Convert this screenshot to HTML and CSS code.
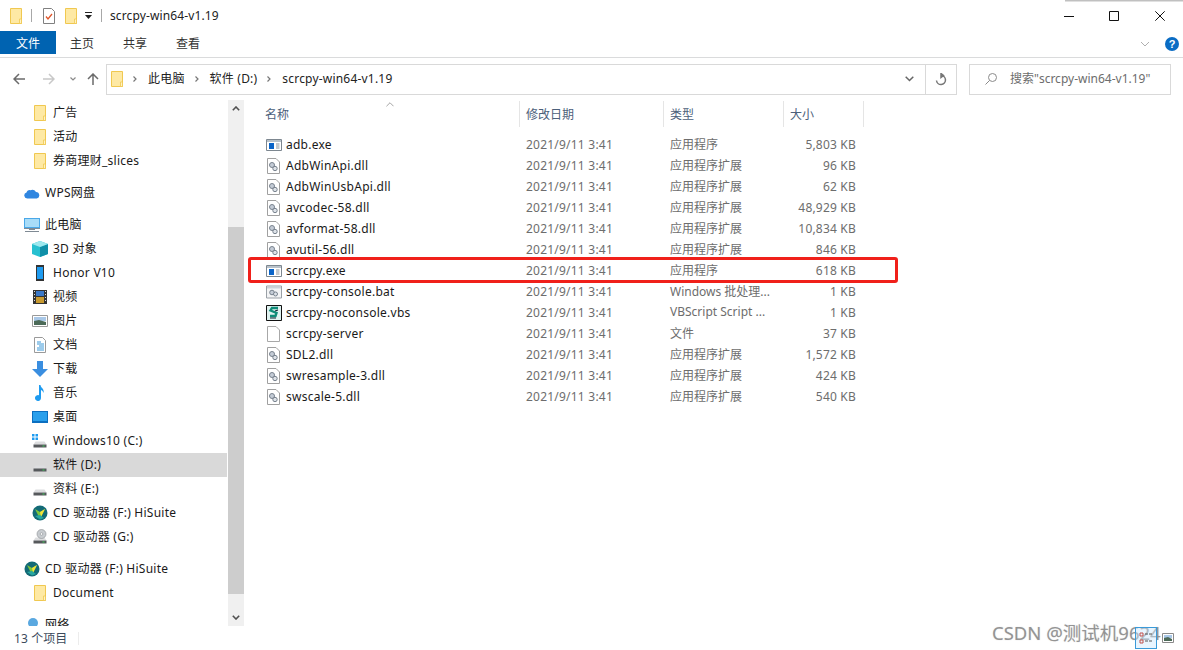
FILE: index.html
```html
<!DOCTYPE html>
<html lang="zh-CN">
<head>
    <meta charset="UTF-8">
    <title>scrcpy-win64-v1.19</title>
    <link rel="stylesheet" href="styles.css">
</head>
<body>
<svg class="defs" width="0" height="0">
    <symbol id="i-folder" viewBox="0 0 12 16">
        <path d="M.5.5h11v15H.5z" fill="#fee9a4" stroke="#f0c850"/>
        <path d="M9.5 11h2v4.5h-2z" fill="#fff3c4" stroke="#f0c850" stroke-width=".8"/>
    </symbol>
    <symbol id="i-exe" viewBox="0 0 16 12">
        <path d="M.5.500h15v11H.5z" fill="#fff" stroke="#7d8790"/>
        <path d="M1 1h14v2H1z" fill="#b9c2ca"/>
        <path d="M3 4h5v6H3z" fill="#0a64c8"/>
        <path d="M10 5h3.500M10 7h3.500M10 9h3.500" stroke="#8a939b"/>
    </symbol>
    <symbol id="i-dll" viewBox="0 0 13 16">
        <path d="M.5.500h8.500l3.500 3.500v11.500H.5z" fill="#fff" stroke="#a0a0a0"/>
        <circle cx="5" cy="7" r="2.500" fill="#c4ccd6" stroke="#78828e"/>
        <circle cx="8" cy="10.500" r="2.200" fill="#dde2e8" stroke="#78828e"/>
    </symbol>
    <symbol id="i-bat" viewBox="0 0 16 13">
        <path d="M.5.500h15v12H.5z" fill="#f3f4f5" stroke="#9aa0a6"/>
        <path d="M1 1h14v2H1z" fill="#ccd2d8"/>
        <circle cx="6" cy="7" r="2.300" fill="#c4ccd6" stroke="#78828e"/>
        <circle cx="9.500" cy="8.500" r="2" fill="#dde2e8" stroke="#78828e"/>
    </symbol>
    <symbol id="i-vbs" viewBox="0 0 16 16">
        <path d="M.5.500h15v15H.5z" fill="#dff2f0" stroke="#111"/>
        <path d="M12 3H6L4.500 5.500l6 2.500-1 3H4" fill="none" stroke="#0d8c78" stroke-width="2.400"/>
        <path d="M12 5l-3 1M4 13h6" stroke="#123" stroke-width="1.200"/>
    </symbol>
    <symbol id="i-file" viewBox="0 0 13 16">
        <path d="M.5.500h8.500l3.500 3.500v11.500H.5z" fill="#fff" stroke="#a8a8a8"/>
    </symbol>
    <symbol id="i-drive" viewBox="0 0 16 16">
        <path d="M3.500 8.500h9l2 3h-13z" fill="#dcdddf"/>
        <path d="M1.500 11.500h13v3h-13z" fill="#56595c"/>
        <path d="M10.500 12.500h2v1h-2z" fill="#3fce58"/>
    </symbol>
    <symbol id="i-hisuite" viewBox="0 0 16 16">
        <circle cx="8" cy="8" r="7.500" fill="#136a76"/>
        <path d="M3 4l5 3 5-3-4 8H7z" fill="#7ec63a"/>
        <path d="M8 7l5-3-4 8z" fill="#f2e23a"/>
        <path d="M3 11l5-1 4 3-4 1.500z" fill="#27a7a0"/>
    </symbol>
</svg>

<div class="window">
    <header class="titlebar">
        <svg class="t-folder"><use href="#i-folder"/></svg>
        <span class="t-sep"></span>
        <svg class="t-check" viewBox="0 0 12 16">
            <path d="M.5.500h8l3 3v12H.5z" fill="#fff" stroke="#808080"/>
            <path d="M3 8.500l2 2.500 4-5" fill="none" stroke="#e0562a" stroke-width="1.300"/>
        </svg>
        <svg class="t-folder t-folder2"><use href="#i-folder"/></svg>
        <svg class="t-drop" viewBox="0 0 7 7"><path d="M0 0h7v1H0zM0 3h7L3.500 7z" fill="#222"/></svg>
        <span class="t-sep t-sep2"></span>
        <span class="t-title">scrcpy-win64-v1.19</span>
        <div class="winbtns">
            <svg class="winbtn" viewBox="0 0 10 10"><path d="M0 5.500h10" stroke="#111"/></svg>
            <svg class="winbtn" viewBox="0 0 10 10"><path d="M.5.500h9v9h-9z" fill="none" stroke="#111"/></svg>
            <svg class="winbtn" viewBox="0 0 10 10"><path d="M.3.300l9.400 9.400M9.700.300L.3 9.700" stroke="#111"/></svg>
        </div>
        <span class="top-shadow"></span>
    </header>

    <nav class="ribbon">
        <span class="tab tab-file">文件</span>
        <span class="tab">主页</span>
        <span class="tab">共享</span>
        <span class="tab">查看</span>
        <svg class="rb-chev" viewBox="0 0 10 6"><path d="M1 1l4 4 4-4" fill="none" stroke="#b0b0b0"/></svg>
        <span class="help">?</span>
    </nav>

    <div class="addr-row">
        <svg class="nav-i" viewBox="0 0 12 12"><path d="M12 6H1M6 1L1 6l5 5" fill="none" stroke="#6b6b6b" stroke-width="1.500"/></svg>
        <svg class="nav-i nav-fwd" viewBox="0 0 12 12"><path d="M0 6h11M6 1l5 5-5 5" fill="none" stroke="#c8c8c8" stroke-width="1.500"/></svg>
        <svg class="nav-c" viewBox="0 0 6 4"><path d="M.5.500L3 3 5.500.500" fill="none" stroke="#8a8a8a" stroke-width="1.200"/></svg>
        <svg class="nav-i nav-up" viewBox="0 0 12 12"><path d="M6 12V1M1 6l5-5 5 5" fill="none" stroke="#6b6b6b" stroke-width="1.500"/></svg>
        <div class="addr">
            <svg class="a-folder"><use href="#i-folder"/></svg>
            <svg class="crumb-c crumb-first" viewBox="0 0 4 6"><path d="M.5.500L3 3 .5 5.500" fill="none" stroke="#777" stroke-width="1.200"/></svg>
            <span class="crumb">此电脑</span>
            <svg class="crumb-c" viewBox="0 0 4 6"><path d="M.5.500L3 3 .5 5.500" fill="none" stroke="#777" stroke-width="1.200"/></svg>
            <span class="crumb">软件 (D:)</span>
            <svg class="crumb-c" viewBox="0 0 4 6"><path d="M.5.500L3 3 .5 5.500" fill="none" stroke="#777" stroke-width="1.200"/></svg>
            <span class="crumb">scrcpy-win64-v1.19</span>
            <span class="addr-space"></span>
            <span class="addr-drop">
                <svg class="drop-c" viewBox="0 0 9 6"><path d="M.7.700l3.800 3.800L8.300.700" fill="none" stroke="#666" stroke-width="1.500"/></svg>
            </span>
            <span class="addr-refresh">
                <svg class="refresh" viewBox="0 0 12 13"><path d="M6 2.500a4.500 4.500 0 1 1-4.500 5M6 .5v4L8.500 2.500z" fill="none" stroke="#777" stroke-width="1.500"/></svg>
            </span>
        </div>
        <div class="search">
            <svg class="s-icon" viewBox="0 0 12 12"><circle cx="7.500" cy="4.500" r="4" fill="none" stroke="#8a8a8a"/><path d="M4.500 7.500L.5 11.500" stroke="#8a8a8a"/></svg>
            <span class="s-text">搜索"scrcpy-win64-v1.19"</span>
        </div>
    </div>

    <main class="content">
        <aside class="side">
            <div class="side-list">
                <div class="s-row child"><svg class="s-i"><use href="#i-folder"/></svg>广告</div>
                <div class="s-row child"><svg class="s-i"><use href="#i-folder"/></svg>活动</div>
                <div class="s-row child gap-after"><svg class="s-i"><use href="#i-folder"/></svg>券商理财_slices</div>
                <div class="s-row top gap-after">
                    <svg class="s-i" viewBox="0 0 16 16"><path d="M3.200 13.500a3 3 0 0 1-.7-5.900 3 3 0 0 1 3.800-2.400A4.500 4.500 0 0 1 12 7a3.300 3.300 0 0 1 .8 6.500z" fill="#2f86e0"/></svg>WPS网盘</div>
                <div class="s-row top">
                    <svg class="s-i" viewBox="0 0 16 16"><path d="M0 1h16v10H0z" fill="#4aa8e8"/><path d="M1 2h14v8H1z" fill="#a8dcf8"/><path d="M0 11h16v1H0zM5 12h6v1H5zM1 14h14v1H1z" fill="#7f8a94"/></svg>此电脑</div>
                <div class="s-row child">
                    <svg class="s-i" viewBox="0 0 16 16"><path d="M8 0l8 3v10l-8 3-8-3V3z" fill="#27c0d0"/><path d="M8 6l8-3v10l-8 3z" fill="#0f8fa8"/><path d="M8 0l8 3-8 3-8-3z" fill="#9ee8ee"/></svg>3D 对象</div>
                <div class="s-row child">
                    <svg class="s-i" viewBox="0 0 16 16"><path d="M4 0h8v16H4z" fill="#333"/><path d="M5 2h6v12H5z" fill="#1e9bf0"/></svg>Honor V10</div>
                <div class="s-row child">
                    <svg class="s-i" viewBox="0 0 16 16"><path d="M1 1h14v14H1z" fill="#333"/><path d="M4 2h8v5H4z" fill="#3a78c8"/><path d="M4 8h8v6H4z" fill="#c89a30"/><path d="M2 2h1v1H2zM2 5h1v1H2zM2 8h1v1H2zM2 11h1v1H2zM13 2h1v1h-1zM13 5h1v1h-1zM13 8h1v1h-1zM13 11h1v1h-1z" fill="#ddd"/></svg>视频</div>
                <div class="s-row child">
                    <svg class="s-i" viewBox="0 0 16 16"><path d="M.5 2.500h15v11H.5z" fill="#fff" stroke="#9a9a9a"/><path d="M2 4h12v4H2z" fill="#a9c8e8"/><path d="M2 8l5-1 7 2v3H2z" fill="#4c6a58"/></svg>图片</div>
                <div class="s-row child">
                    <svg class="s-i" viewBox="0 0 16 16"><path d="M2.500.5h8l3 3v12h-11z" fill="#fff" stroke="#9a9a9a"/><path d="M5 5h4M5 7h7M7 9h5M5 11h7M5 13h7" stroke="#3a98d8"/></svg>文档</div>
                <div class="s-row child">
                    <svg class="s-i" viewBox="0 0 16 16"><path d="M5 0h6v8h5l-8 8-8-8h5z" fill="#3a8ee0"/></svg>下载</div>
                <div class="s-row child">
                    <svg class="s-i" viewBox="0 0 16 16"><path d="M7 0h1.500c.3 3 4 3.500 3 8-.5-2-2-3-2.500-3v8a3 3 0 1 1-2-2.800z" fill="#1e9bf0"/></svg>音乐</div>
                <div class="s-row child">
                    <svg class="s-i" viewBox="0 0 16 16"><path d="M0 2h16v12H0z" fill="#0b6fc0"/><path d="M1 3h14v9H1z" fill="#2aa0ec"/></svg>桌面</div>
                <div class="s-row child">
                    <svg class="s-i" viewBox="0 0 16 16"><use href="#i-drive"/><path d="M0 1h2.500v2.500H0zM3.500 1H6v2.500H3.500zM0 4.500h2.500V7H0zM3.500 4.500H6V7H3.500z" fill="#1e9bf0"/></svg>Windows10 (C:)</div>
                <div class="s-row child selected"><svg class="s-i"><use href="#i-drive"/></svg>软件 (D:)</div>
                <div class="s-row child"><svg class="s-i"><use href="#i-drive"/></svg>资料 (E:)</div>
                <div class="s-row child"><svg class="s-i"><use href="#i-hisuite"/></svg>CD 驱动器 (F:) HiSuite</div>
                <div class="s-row child gap-after">
                    <svg class="s-i" viewBox="0 0 16 16"><use href="#i-drive"/><circle cx="9.500" cy="5" r="4.500" fill="#c8ccd0" stroke="#8a8e92" stroke-width=".6"/><circle cx="9.500" cy="5" r="1.300" fill="#fff" stroke="#8a8e92" stroke-width=".6"/></svg>CD 驱动器 (G:)</div>
                <div class="s-row top"><svg class="s-i"><use href="#i-hisuite"/></svg>CD 驱动器 (F:) HiSuite</div>
                <div class="s-row child gap-after"><svg class="s-i"><use href="#i-folder"/></svg>Document</div>
                <div class="s-row top">
                    <svg class="s-i" viewBox="0 0 16 16"><circle cx="9" cy="6" r="5" fill="#5aa8e0"/><path d="M0 9h16v3H0z" fill="#3a88c8"/></svg>网络</div>
            </div>
            <div class="scroll">
                <span class="sc-btn"><svg class="sc-a" viewBox="0 0 8 5"><path d="M.8 4.200L4 1l3.200 3.200" fill="none" stroke="#505050" stroke-width="1.600"/></svg></span>
                <span class="sc-thumb"></span>
                <span class="sc-space"></span>
                <span class="sc-btn"><svg class="sc-a" viewBox="0 0 8 5"><path d="M.8.800L4 4 7.200.800" fill="none" stroke="#505050" stroke-width="1.600"/></svg></span>
            </div>
        </aside>

        <section class="files">
            <svg class="sort-up" viewBox="0 0 9 5"><path d="M.5 4.500l4-4 4 4" fill="none" stroke="#9a9a9a"/></svg>
            <div class="grid head">
                <span class="col c-name">名称</span>
                <span class="col">修改日期</span>
                <span class="col">类型</span>
                <span class="col">大小</span>
            </div>
            <div class="rows">
                <div class="grid row"><span class="name"><svg class="f-i f-wide"><use href="#i-exe"/></svg>adb.exe</span><span class="muted date">2021/9/11 3:41</span><span class="muted kind">应用程序</span><span class="muted size">5,803 KB</span></div>
                <div class="grid row"><span class="name"><svg class="f-i"><use href="#i-dll"/></svg>AdbWinApi.dll</span><span class="muted date">2021/9/11 3:41</span><span class="muted kind">应用程序扩展</span><span class="muted size">96 KB</span></div>
                <div class="grid row"><span class="name"><svg class="f-i"><use href="#i-dll"/></svg>AdbWinUsbApi.dll</span><span class="muted date">2021/9/11 3:41</span><span class="muted kind">应用程序扩展</span><span class="muted size">62 KB</span></div>
                <div class="grid row"><span class="name"><svg class="f-i"><use href="#i-dll"/></svg>avcodec-58.dll</span><span class="muted date">2021/9/11 3:41</span><span class="muted kind">应用程序扩展</span><span class="muted size">48,929 KB</span></div>
                <div class="grid row"><span class="name"><svg class="f-i"><use href="#i-dll"/></svg>avformat-58.dll</span><span class="muted date">2021/9/11 3:41</span><span class="muted kind">应用程序扩展</span><span class="muted size">10,834 KB</span></div>
                <div class="grid row"><span class="name"><svg class="f-i"><use href="#i-dll"/></svg>avutil-56.dll</span><span class="muted date">2021/9/11 3:41</span><span class="muted kind">应用程序扩展</span><span class="muted size">846 KB</span></div>
                <div class="grid row"><span class="name"><svg class="f-i f-wide"><use href="#i-exe"/></svg>scrcpy.exe</span><span class="muted date">2021/9/11 3:41</span><span class="muted kind">应用程序</span><span class="muted size">618 KB</span></div>
                <div class="grid row"><span class="name"><svg class="f-i f-wide"><use href="#i-bat"/></svg>scrcpy-console.bat</span><span class="muted date">2021/9/11 3:41</span><span class="muted kind">Windows 批处理...</span><span class="muted size">1 KB</span></div>
                <div class="grid row"><span class="name"><svg class="f-i f-wide"><use href="#i-vbs"/></svg>scrcpy-noconsole.vbs</span><span class="muted date">2021/9/11 3:41</span><span class="muted kind">VBScript Script ...</span><span class="muted size">1 KB</span></div>
                <div class="grid row"><span class="name"><svg class="f-i"><use href="#i-file"/></svg>scrcpy-server</span><span class="muted date">2021/9/11 3:41</span><span class="muted kind">文件</span><span class="muted size">37 KB</span></div>
                <div class="grid row"><span class="name"><svg class="f-i"><use href="#i-dll"/></svg>SDL2.dll</span><span class="muted date">2021/9/11 3:41</span><span class="muted kind">应用程序扩展</span><span class="muted size">1,572 KB</span></div>
                <div class="grid row"><span class="name"><svg class="f-i"><use href="#i-dll"/></svg>swresample-3.dll</span><span class="muted date">2021/9/11 3:41</span><span class="muted kind">应用程序扩展</span><span class="muted size">424 KB</span></div>
                <div class="grid row"><span class="name"><svg class="f-i"><use href="#i-dll"/></svg>swscale-5.dll</span><span class="muted date">2021/9/11 3:41</span><span class="muted kind">应用程序扩展</span><span class="muted size">540 KB</span></div>
            </div>
            <div class="redbox"></div>
        </section>
    </main>

    <footer class="status">
        <span class="count">13 个项目</span>
        <span class="st-sep"></span>
        <span class="st-space"></span>
        <span class="view view-on">
            <svg class="view-i" viewBox="0 0 14 14"><path d="M1 2h3v3H1zM1 9h3v3H1z" fill="none" stroke="#c0504d"/><path d="M6 3h8M6 10h8" stroke="#555" stroke-dasharray="3 1"/></svg>
        </span>
        <span class="view">
            <svg class="view-i2" viewBox="0 0 12 10"><path d="M.5.500h11v9H.5z" fill="#fff" stroke="#8a8a8a"/><path d="M2 2h8v3H2z" fill="#a9c8e8"/><path d="M2 5l4-1 4 2v2H2z" fill="#4c6a58"/></svg>
        </span>
    </footer>
    <div class="watermark">CSDN @测试机9624</div>
</div>
</body>
</html>
```

FILE: styles.css
```css
* { box-sizing: border-box; }
html, body { margin: 0; height: 100%; overflow: hidden; }
body { background: #fff; color: #1a1a1a; font-family: "Noto Sans", "Noto Sans CJK SC", sans-serif; font-size: 12px; }
.defs { position: absolute; }
svg { display: block; flex: none; }

.window { position: relative; display: flex; flex-direction: column; height: 650px; }

/* title bar */
.titlebar { position: relative; display: flex; align-items: center; height: 31px; padding-left: 10px; flex: none; }
.t-folder { width: 12px; height: 16px; }
.t-folder2 { margin-left: 10px; }
.t-sep { width: 1px; height: 13px; background: #a8a8a8; margin: 0 11px 0 9px; }
.t-sep2 { margin: 0 8px 0 9px; }
.t-check { width: 12px; height: 16px; }
.t-drop { width: 7px; height: 7px; margin-left: 8px; }
.t-title { font-size: 12px; color: #222; letter-spacing: .12px; }
.winbtns { display: flex; margin-left: auto; gap: 35px; padding-right: 18px; }
.winbtn { width: 10px; height: 10px; }
.winbtn:last-child { margin-left: 1px; }
.top-shadow { position: absolute; top: 0; right: 0; width: 118px; height: 2px; background: linear-gradient(#b0b0b0, #f0f0f0); }

/* ribbon tabs */
.ribbon { display: flex; align-items: flex-start; height: 27px; border-bottom: 1px solid #dadbdc; flex: none; }
.tab { width: 53px; height: 23px; line-height: 25px; text-align: center; color: #333; }
.tab-file { width: 56px; margin-right: 5px; background: #0063b1; color: #fff; }
.tab:nth-child(2) { width: 42px; }
.tab:nth-child(3) { width: 64px; }
.tab:nth-child(4) { width: 42px; }
.rb-chev { width: 10px; height: 6px; margin: 10px 0 0 auto; }
.help { width: 14px; height: 14px; margin: 6px 4px 0 15px; border-radius: 50%; background: #0a6cc4; color: #fff; font: bold 11px/14px "Liberation Sans", sans-serif; text-align: center; }

/* address row */
.addr-row { display: flex; align-items: center; height: 32px; margin-top: 5px; flex: none; padding: 0 12px 0 13px; }
.nav-i { width: 12px; height: 12px; }
.nav-fwd { margin-left: 18px; }
.nav-c { width: 6px; height: 4px; margin-left: 15px; }
.nav-up { margin-left: 11px; }
.addr { display: flex; align-items: center; width: 851px; height: 31px; margin-left: 7px; padding-left: 4px; border: 1px solid #d9d9d9; }
.a-folder { width: 12px; height: 16px; }
.crumb-c { width: 4px; height: 6px; margin: 0 11px 0 9px; }
.crumb-first { margin-left: 10px; }
.crumb { color: #222; margin-right: 1px; padding-bottom: 2px; letter-spacing: .2px; }
.addr-space { flex: 1; }
.addr-drop { display: flex; align-items: center; justify-content: center; width: 31px; height: 100%; }
.drop-c { width: 9px; height: 6px; }
.addr-refresh { display: flex; align-items: center; justify-content: center; width: 31px; height: 100%; border-left: 1px solid #d9d9d9; }
.refresh { width: 12px; height: 13px; }
.search { display: flex; align-items: center; width: 202px; height: 31px; margin-left: 12px; padding-left: 15px; border: 1px solid #d9d9d9; color: #6d6d6d; }
.s-icon { width: 12px; height: 12px; margin-right: 13px; }
.s-text { padding-bottom: 2px; }

/* main */
.content { display: flex; height: 526px; margin-top: 5px; flex: none; overflow: hidden; }

.side { display: flex; width: 244px; flex: none; }
.side-list { width: 228px; padding-top: 1px; overflow: hidden; }
.s-row { display: flex; align-items: center; gap: 5px; height: 24px; padding-bottom: 2px; color: #1a1a1a; white-space: nowrap; letter-spacing: .25px; }
.s-row.child { padding-left: 32px; }
.s-row.top { padding-left: 24px; }
.s-row.gap-after { margin-bottom: 8px; }
.s-row.selected { width: 227px; background: #d9d9d9; }
.s-i { width: 16px; height: 16px; margin-top: 2px; }

.scroll { display: flex; flex-direction: column; width: 16px; background: #f0f0f0; }
.sc-btn { display: flex; align-items: center; justify-content: center; height: 17px; flex: none; }
.sc-a { width: 8px; height: 5px; }
.sc-thumb { height: 367px; margin-top: 110px; background: #cdcdcd; flex: none; }
.sc-space { flex: 1; }

/* file list */
.files { position: relative; flex: 1; }
.grid { display: grid; grid-template-columns: 276px 144px 120px 80px; }
.head { height: 26px; margin-top: 1px; }
.col { display: flex; align-items: center; padding-left: 6px; border-right: 1px solid #e5e5e5; color: #4c607a; }
.col.c-name { padding-left: 21px; }
.sort-up { position: absolute; left: 142px; top: 2px; width: 8px; height: 5px; }
.rows { margin-top: 7px; }
.row { height: 21px; align-items: center; }
.name { display: flex; align-items: center; padding-left: 22px; color: #1a1a1a; white-space: nowrap; letter-spacing: .25px; }
.muted { padding-left: 6px; color: #6d6d6d; white-space: nowrap; }
.date { letter-spacing: .22px; }
.kind { padding-bottom: 2px; }
.size { padding: 0 8px 0 0; text-align: right; letter-spacing: .2px; }
.f-i { width: 13px; height: 16px; margin: 0 6px 0 1px; }
.f-wide { width: 16px; height: 16px; margin: 0 4px 0 0; }

.redbox { position: absolute; left: 4px; top: 157px; width: 650px; height: 26px; border: 3px solid #f0201a; border-radius: 3px; }

/* status bar */
.status { position: relative; z-index: 1; display: flex; align-items: center; flex: 1; padding-left: 14px; padding-right: 4px; }
.count { color: #3c4a5c; letter-spacing: .1px; }
.st-sep { width: 1px; height: 13px; margin-left: 11px; background: #ececec; }
.st-space { flex: 1; }
.view { display: flex; align-items: center; justify-content: center; width: 22px; height: 22px; }
.view-on { background: rgba(204, 232, 255, .45); border: 1px solid #3a9ad9; }
.view-i { width: 14px; height: 14px; }
.view-i2 { width: 12px; height: 10px; }

.watermark { position: absolute; left: 992px; top: 621px; font-size: 18.5px; line-height: 24px; color: rgba(120, 120, 120, .7); text-shadow: 0 0 1px rgba(150, 150, 150, .5); white-space: nowrap; }
```
